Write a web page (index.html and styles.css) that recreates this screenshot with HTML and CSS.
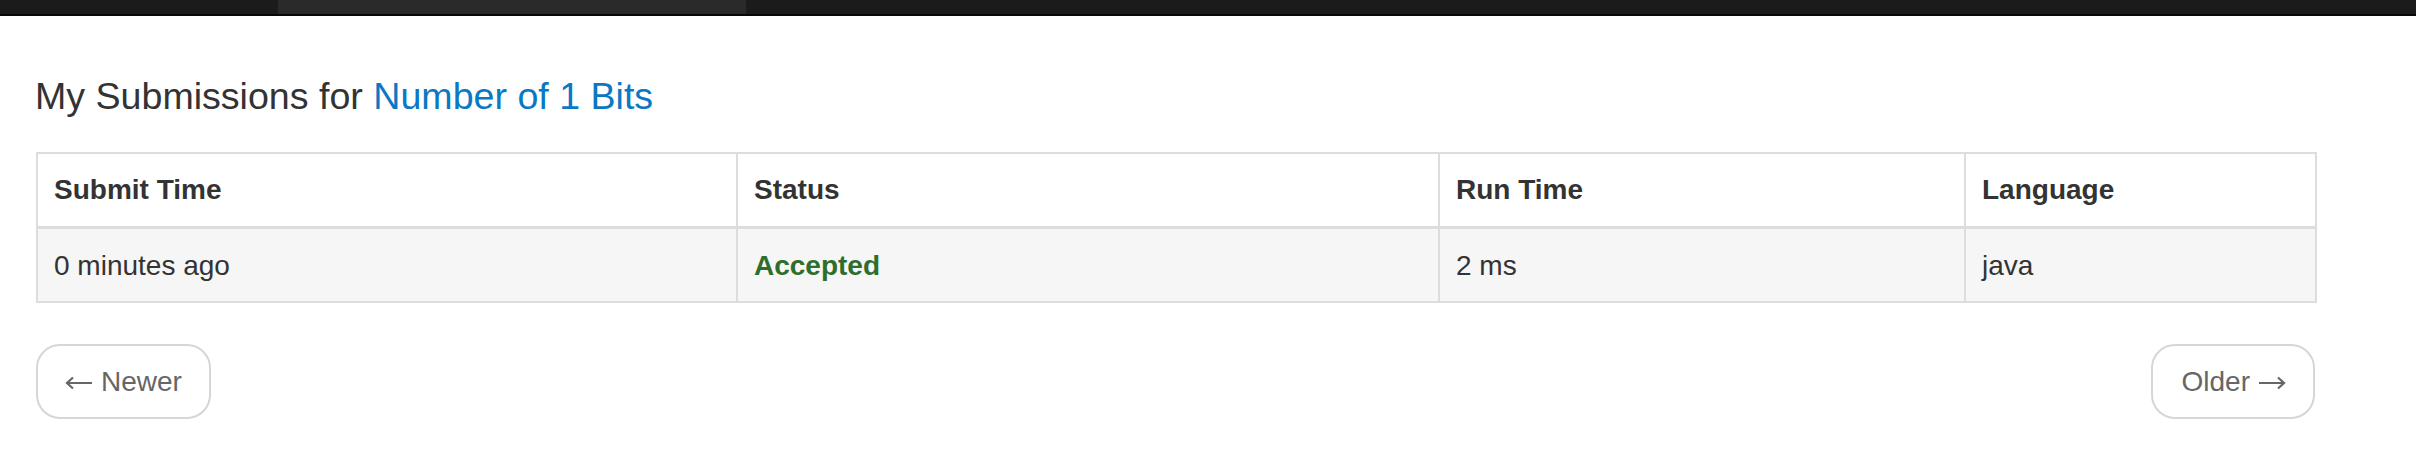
FILE: index.html
```html
<!DOCTYPE html>
<html>
<head>
<meta charset="utf-8">
<title>My Submissions</title>
<link rel="stylesheet" href="styles.css">
</head>
<body>
<div class="navbar"><div class="nav-tab"></div></div>
<div class="content">
  <h3 class="title">My Submissions for <a class="problem-link" href="#">Number of 1 Bits</a></h3>
  <table class="subs">
    <colgroup>
      <col class="c-time"><col class="c-status"><col class="c-run"><col class="c-lang">
    </colgroup>
    <thead>
      <tr><th>Submit Time</th><th>Status</th><th>Run Time</th><th>Language</th></tr>
    </thead>
    <tbody>
      <tr><td>0 minutes ago</td><td><a class="accepted" href="#">Accepted</a></td><td>2 ms</td><td>java</td></tr>
    </tbody>
  </table>
  <div class="pager">
    <a class="pager-btn" href="#"><svg class="arrow arrow-left" width="28" height="14" viewBox="0 0 28 14" aria-label="←"><path d="M27 7H2M8 1.5L2 7l6 5.5" fill="none" stroke="#666" stroke-width="2.2"/></svg>Newer</a>
    <a class="pager-btn pager-older" href="#">Older<svg class="arrow arrow-right" width="28" height="14" viewBox="0 0 28 14" aria-label="→"><path d="M1 7h25M20 1.5L26 7l-6 5.5" fill="none" stroke="#666" stroke-width="2.2"/></svg></a>
  </div>
</div>
</body>
</html>
```
FILE: styles.css
```css
html, body {
  margin: 0;
  padding: 0;
  background: #fff;
}
body {
  font-family: "Liberation Sans", Arial, Helvetica, sans-serif;
  color: #333;
  font-size: 28px;
  line-height: 40px;
}
.navbar {
  height: 14px;
  background: #1b1b1b;
  border-bottom: 2px solid #080808;
  display: flex;
}
.nav-tab {
  margin-left: 278px;
  width: 468px;
  height: 14px;
  background: #2a2a2a;
}
.content {
  width: 2279px;
  padding-left: 36px;
}
.title {
  margin: 59px 0 35px -1px;
  font-size: 37.6px;
  line-height: 42px;
  font-weight: normal;
  color: #333;
}
.problem-link {
  color: #0a78c4;
  text-decoration: none;
}
.subs {
  width: 2279px;
  table-layout: fixed;
  border-collapse: collapse;
  border: 2px solid #ddd;
}
.c-time { width: 700px; }
.c-status { width: 702px; }
.c-run { width: 526px; }
.c-lang { width: 351px; }
.subs th, .subs td {
  text-align: left;
  padding: 16px 16px;
  border: 2px solid #ddd;
  line-height: 40px;
  vertical-align: top;
}
.subs th {
  font-weight: bold;
  border-bottom: 3px solid #ddd;
  background: #fff;
}
.subs td {
  background: #f6f6f6;
  padding-top: 17px;
  padding-bottom: 15px;
}
.accepted {
  color: #2e6e2c;
  font-weight: bold;
  text-decoration: none;
}
.pager {
  margin-top: 41px;
  display: flex;
  justify-content: space-between;
}
.pager-btn {
  display: inline-flex;
  align-items: center;
  padding: 15px 27px;
  line-height: 41px;
  font-size: 28px;
  color: #666;
  background: #fff;
  border: 2px solid #d6d6d6;
  border-radius: 24px;
  text-decoration: none;
}
.pager-older {
  padding-left: 29px;
}
.arrow {
  display: block;
  margin-top: 3px;
}
.arrow-left {
  margin-right: 8px;
}
.arrow-right {
  margin-left: 8px;
}
```
